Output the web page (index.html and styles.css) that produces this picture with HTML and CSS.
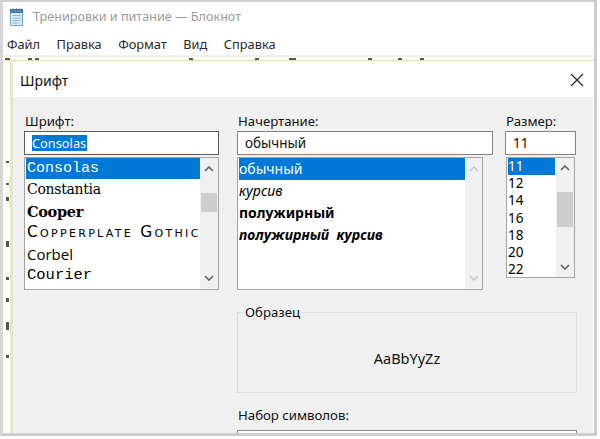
FILE: index.html
```html
<!DOCTYPE html>
<html lang="ru">
<head>
<meta charset="utf-8">
<title>Шрифт</title>
<link rel="stylesheet" href="styles.css">
</head>
<body>
<div class="window">
  <div class="titlebar">
    <svg class="app-icon" width="17" height="18" viewBox="0 0 17 18">
      <rect x="2.5" y="2.5" width="12" height="15" fill="#d9ecfa" stroke="#7aa6cc"/>
      <rect x="2.5" y="1.5" width="12" height="3" fill="#4d8fcf" stroke="#3a74ad"/>
      <path d="M4.5 7.5h8M4.5 10h8M4.5 12.5h8M4.5 15h6" stroke="#8fb4d6" stroke-width="1"/>
      <path d="M5 0.5v3M8.5 0.5v3M12 0.5v3" stroke="#6a6a6a" stroke-width="1"/>
    </svg>
    <span class="title">Тренировки и питание — Блокнот</span>
  </div>
  <div class="menubar">
    <span>Файл</span><span>Правка</span><span>Формат</span><span>Вид</span><span>Справка</span>
  </div>
  <div class="editor">
    <div class="peek">
      <i class="m w6"></i><i class="m w5 g4"></i><i class="m w4 g2"></i><i class="m w4 g160"></i><i class="m w4 g62"></i><i class="m w8 g30"></i><i class="m w5 g70"></i><i class="m w4 g28"></i><i class="m w4 g18"></i>
    </div>
    <div class="strip">
      <i class="s s1"></i><i class="s s2"></i><i class="s s3"></i><i class="s s4"></i><i class="s s5"></i><i class="s s6"></i><i class="s s7"></i><i class="s s8"></i>
    </div>

    <div class="dialog">
      <div class="dlg-head">
        <span class="dlg-title">Шрифт</span>
        <svg class="close" width="14" height="14" viewBox="0 0 14 14">
          <path d="M1 1L13 13M13 1L1 13" stroke="#222" stroke-width="1.1"/>
        </svg>
      </div>
      <div class="dlg-body">
        <div class="cols">
          <div class="col col-font">
            <div class="label">Шрифт:</div>
            <div class="field focused"><span class="sel">Consolas</span></div>
            <div class="list list-font">
              <ul class="items">
                <li class="on f-consolas">Consolas</li>
                <li class="f-constantia">Constantia</li>
                <li class="f-cooper">Cooper</li>
                <li class="f-copper">Copperplate Gothic</li>
                <li class="f-corbel">Corbel</li>
                <li class="f-courier">Courier</li>
              </ul>
              <div class="scrollbar">
                <div class="arrow"><svg width="10" height="6" viewBox="0 0 10 6"><path d="M1 5L5 1L9 5" fill="none" stroke="#606060" stroke-width="1.6"/></svg></div>
                <div class="track"><div class="thumb thumb-font"></div></div>
                <div class="arrow"><svg width="10" height="6" viewBox="0 0 10 6"><path d="M1 1L5 5L9 1" fill="none" stroke="#606060" stroke-width="1.6"/></svg></div>
              </div>
            </div>
          </div>

          <div class="col col-style">
            <div class="label">Начертание:</div>
            <div class="field"><span class="val">обычный</span></div>
            <div class="list list-style">
              <ul class="items">
                <li class="on">обычный</li>
                <li class="it">курсив</li>
                <li class="bd">полужирный</li>
                <li class="bd it">полужирный&nbsp; курсив</li>
              </ul>
              <div class="scrollbar">
                <div class="arrow"><svg width="10" height="6" viewBox="0 0 10 6"><path d="M1 5L5 1L9 5" fill="none" stroke="#c4c4c4" stroke-width="1.4"/></svg></div>
                <div class="track"></div>
                <div class="arrow"><svg width="10" height="6" viewBox="0 0 10 6"><path d="M1 1L5 5L9 1" fill="none" stroke="#c4c4c4" stroke-width="1.4"/></svg></div>
              </div>
            </div>
          </div>

          <div class="col col-size">
            <div class="label">Размер:</div>
            <div class="field"><span class="val">11</span></div>
            <div class="list list-size">
              <ul class="items">
                <li class="on">11</li>
                <li>12</li>
                <li>14</li>
                <li>16</li>
                <li>18</li>
                <li>20</li>
                <li>22</li>
              </ul>
              <div class="scrollbar">
                <div class="arrow"><svg width="10" height="6" viewBox="0 0 10 6"><path d="M1 5L5 1L9 5" fill="none" stroke="#606060" stroke-width="1.6"/></svg></div>
                <div class="track"><div class="thumb thumb-size"></div></div>
                <div class="arrow"><svg width="10" height="6" viewBox="0 0 10 6"><path d="M1 1L5 5L9 1" fill="none" stroke="#606060" stroke-width="1.6"/></svg></div>
              </div>
            </div>
          </div>
        </div>

        <div class="lower">
          <fieldset class="sample">
            <legend>Образец</legend>
            <div class="sample-text">AaBbYyZz</div>
          </fieldset>
          <div class="label label-charset">Набор символов:</div>
          <div class="combo"></div>
        </div>
      </div>
    </div>
  </div>
</div>
</body>
</html>
```

FILE: styles.css
```css
* { box-sizing: border-box; }

html, body {
  margin: 0;
  padding: 0;
  background: #ffffff;
}

body {
  width: 600px;
  height: 439px;
  overflow: hidden;
  font-family: "Noto Sans", "Open Sans", sans-serif;
  color: #000;
}

.window {
  width: 597px;
  height: 436px;
  border-top: 2px solid #cfcfcf;
  border-left: 3px solid #d6d6d6;
  border-right: 3px solid #cdcdcd;
  border-bottom: 3px solid #cdcdcd;
  background: #fff;
  display: flex;
  flex-direction: column;
  overflow: hidden;
}

.titlebar {
  height: 31px;
  display: flex;
  align-items: center;
  padding-left: 5px;
  padding-bottom: 2px;
  gap: 8px;
  flex: none;
}

.app-icon { display: block; margin-top: 1px; }

.title {
  font-size: 12.6px;
  color: #9a9a9a;
}

.menubar {
  height: 24px;
  display: flex;
  align-items: center;
  gap: 16.5px;
  padding-left: 4px;
  font-size: 12.8px;
  color: #2b2b2b;
  border-bottom: 2px solid #f1f1f1;
  flex: none;
}

.editor {
  position: relative;
  flex: 1;
  background: #fffffb;
}

.peek {
  height: 4px;
  display: flex;
  align-items: flex-end;
  padding-left: 2px;
  border-bottom: 1px solid #e6e2a6;
}

.m {
  display: block;
  flex: none;
  height: 2px;
  max-height: 2px;
  background: #555;
}
.w8 { width: 7px; }
.w6 { width: 5px; }
.w5 { width: 4px; }
.w4 { width: 4px; }
.g2 { margin-left: 3px; }
.g4 { margin-left: 18px; }
.g18 { margin-left: 18px; }
.g28 { margin-left: 26px; }
.g30 { margin-left: 30px; }
.g62 { margin-left: 62px; }
.g70 { margin-left: 72px; }
.g160 { margin-left: 150px; }

.strip {
  width: 9px;
  height: 380px;
  border-right: 2px solid #ebe8b6;
  display: flex;
  flex-direction: column;
  align-items: flex-start;
  padding-left: 3px;
}

.s {
  display: block;
  width: 3px;
  height: 2px;
  background: #555;
  flex: none;
}
.s1 { margin-top: 100px; }
.s2 { margin-top: 20px; }
.s3 { margin-top: 12px; height: 4px; }
.s4 { margin-top: 40px; height: 6px; }
.s5 { margin-top: 30px; height: 3px; }
.s6 { margin-top: 18px; height: 4px; }
.s7 { margin-top: 20px; height: 8px; }
.s8 { margin-top: 25px; height: 3px; }

.dialog {
  position: absolute;
  left: 9px;
  top: 5px;
  width: 581px;
  height: 400px;
  display: flex;
  flex-direction: column;
  border-left: 1px solid #e4e4e4;
}

.dlg-head {
  height: 35px;
  background: #fff;
  display: flex;
  align-items: center;
  justify-content: space-between;
  padding: 0 9px 0 7px;
  flex: none;
}

.dlg-title {
  font-size: 14px;
  color: #111;
  margin-top: 1px;
}

.close { display: block; margin-top: 1px; }

.dlg-body {
  flex: 1;
  background: #f0f0f0;
  padding: 15px 0 0 11px;
}

.cols {
  display: flex;
  align-items: flex-start;
}

.col-font { width: 195px; }
.col-style { width: 256px; margin-left: 18px; }
.col-size { width: 71px; margin-left: 12px; }

.label {
  font-size: 13.2px;
  line-height: 18px;
  height: 18px;
  color: #111;
  padding-left: 1px;
  margin-bottom: 1px;
}

.field {
  height: 24px;
  background: #fff;
  border: 1px solid #848484;
  display: flex;
  align-items: center;
  font-size: 13.5px;
  padding-left: 7px;
}

.field.focused { border-color: #5b5b5b; }

.sel {
  background: #0078d7;
  color: #fff;
  line-height: 16px;
  padding: 0 1px 0 0;
  font-size: 12.8px;
}

.val { color: #111; }

.list {
  margin-top: 2px;
  background: #fff;
  border: 1px solid #a4a4a4;
  display: flex;
  overflow: hidden;
}

.list-font { height: 133px; }
.list-style { height: 133px; width: 246px; }
.list-size { height: 121px; width: 69px; margin-left: 1px; }

.items {
  list-style: none;
  margin: 0;
  padding: 0 0 0 1px;
  flex: 1;
  min-width: 0;
}

.items li {
  white-space: nowrap;
  overflow: hidden;
  padding-left: 1px;
  color: #000;
}

.list-font .items li {
  height: 21.5px;
  line-height: 21.5px;
  font-size: 15px;
}

.list-style .items li {
  height: 22px;
  line-height: 22px;
  font-size: 14px;
  padding-left: 0;
}

.list-size .items li {
  height: 17.2px;
  line-height: 17.2px;
  font-size: 13.5px;
  padding-left: 0;
}

.items li.on {
  background: #0078d7;
  color: #fff;
}

.list-font .items li.on { height: 21px; }
.list-size .items li.on { width: 47px; }

.f-consolas { font-family: "Liberation Mono", "DejaVu Sans Mono", monospace; }
.f-constantia { font-family: "DejaVu Serif", serif; font-size: 14px !important; letter-spacing: -0.3px; }
.f-cooper { font-family: "DejaVu Serif", serif; font-weight: 900; font-size: 14.5px !important; letter-spacing: -0.3px; }
.f-copper {
  font-family: "DejaVu Sans", sans-serif;
  font-variant: small-caps;
  font-size: 15.5px !important;
  letter-spacing: 2.3px;
}
.f-corbel { font-family: "Open Sans", sans-serif; }
.f-courier { font-family: "Liberation Mono", monospace; font-size: 15.5px !important; }

.it { font-style: italic; }
.bd { font-weight: 700; }

.scrollbar {
  width: 18px;
  flex: none;
  display: flex;
  flex-direction: column;
  background: #f0f0f0;
}

.list-style .scrollbar { width: 17px; }

.arrow {
  height: 22px;
  display: flex;
  align-items: center;
  justify-content: center;
  flex: none;
}

.list-size .arrow { height: 20px; }

.track { flex: 1; }

.thumb {
  background: #cdcdcd;
  margin: 0 1px;
}

.thumb-font { margin-top: 13px; height: 19px; }
.thumb-size { margin-top: 14px; height: 35px; }

.lower {
  margin-left: 213px;
  width: 340px;
  margin-top: 13px;
}

.sample {
  margin: 0;
  padding: 0;
  border: 1px solid #dcdcdc;
  height: 90px;
}

.sample legend {
  font-size: 13.2px;
  line-height: 18px;
  padding: 0 2px;
  margin-left: 5px;
  color: #111;
}

.sample-text {
  height: 72px;
  display: flex;
  align-items: center;
  justify-content: center;
  font-size: 14.5px;
  color: #111;
  padding-top: 2px;
}

.label-charset {
  margin-top: 13px;
  margin-bottom: 6px;
}

.combo {
  height: 24px;
  background: #fff;
  border: 1px solid #8a8a8a;
}
```
